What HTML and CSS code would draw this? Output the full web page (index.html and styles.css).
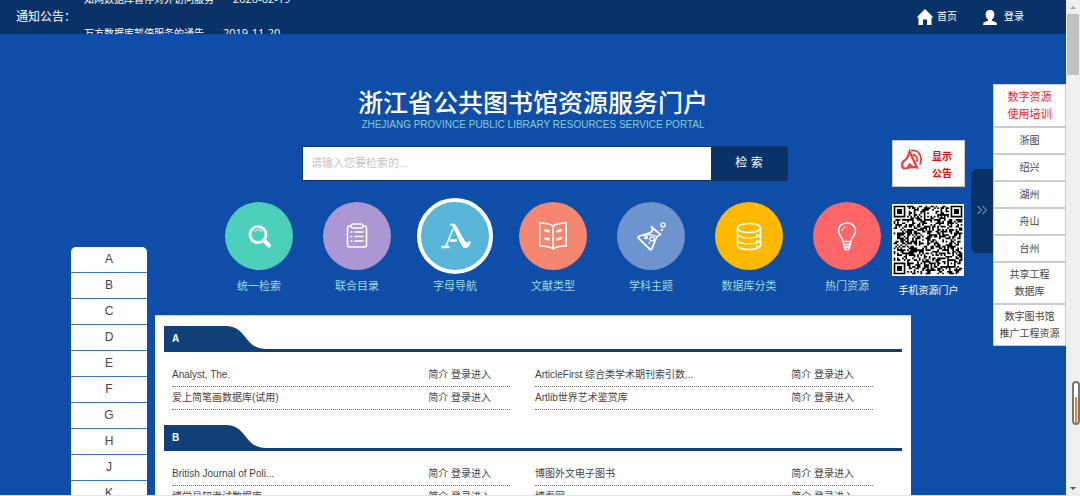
FILE: index.html
```html
<!DOCTYPE html>
<html lang="zh-CN">
<head>
<meta charset="utf-8">
<title>浙江省公共图书馆资源服务门户</title>
<link rel="stylesheet" href="styles.css">
</head>
<body>
<div class="page">
  <header class="topbar">
    <span class="topbar-label">通知公告：</span>
    <ul class="news">
      <li><a href="#">知网数据库暂停对外访问服务</a><time>2020-02-19</time></li>
      <li><a href="#">万方数据库暂停服务的通告</a><time>2019-11-20</time></li>
    </ul>
    <nav class="account">
      <a href="#"><svg width="18" height="17" viewBox="0 0 18 17"><path fill="#fff" d="M9 0 17.500 8.500H15.500V16H11V10.500H7V16H2.500V8.500H.5Z"/></svg>首页</a>
      <a href="#" class="login"><svg width="16" height="17" viewBox="0 0 16 17"><path fill="#fff" d="M8 1C4.800 1 3.500 3.200 3.700 6c.1 2 1 3.600 2.300 4.500v1.200L1.500 13.500 1 16h14l-.5-2.500L10 11.700v-1.200c1.300-.9 2.200-2.500 2.300-4.500C12.500 3.200 11.200 1 8 1Z"/></svg>登录</a>
    </nav>
  </header>

  <div class="layout">
    <nav class="letters">
      <a href="#">A</a><a href="#">B</a><a href="#">C</a><a href="#">D</a><a href="#">E</a><a href="#">F</a><a href="#">G</a><a href="#">H</a><a href="#">J</a><a href="#">K</a>
    </nav>

    <main class="center">
      <h1 class="title">浙江省公共图书馆资源服务门户</h1>
      <p class="subtitle">ZHEJIANG PROVINCE PUBLIC LIBRARY RESOURCES SERVICE PORTAL</p>
      <form class="search">
        <input type="text" aria-label="检索词" placeholder="请输入您要检索的...">
        <button type="button">检 索</button>
      </form>
      <nav class="channels">
        <a href="#"><span class="slot"><span class="disc green"><svg width="34" height="34" viewBox="0 0 34 34"><circle cx="16" cy="15.500" r="8" stroke-width="2.800"/><path d="M12 13c2-2.500 5-2.800 8-.5" stroke-width="1"/><path d="m22 21.500 5 5" stroke-width="4" stroke-linecap="round"/></svg></span></span>统一检索</a>
        <a href="#"><span class="slot"><span class="disc purple"><svg width="34" height="34" viewBox="0 0 34 34"><rect x="7.500" y="7" width="19" height="21" rx="2" stroke-width="1.600"/><rect x="11" y="5" width="12" height="4" rx="2" fill="#ab97d4"/><path d="M10.500 13h2m2 0h9m-13 4.500h2m2 0h9m-13 4.500h2m2 0h9" stroke-width="1.600"/></svg></span></span>联合目录</a>
        <a href="#"><span class="slot"><span class="disc sky active"><svg width="36" height="34" viewBox="0 0 36 34"><path fill="#fff" stroke="none" d="M12.500 6c2-2.500 5.500-2 7 1l8 14.500c1 1.800 2.500 2.500 3.500 1.400 1-1 3.500-.8 2.500 1.600-.8 2.500-2.500 4.500-5 4.500-2 0-3-1-4-3L15.500 7.500c-.8-1.500-2-1-3-1.500Z"/><path d="m16 10-7 17" stroke-width="1.600"/><path d="M4.500 28h8M13 21.500h7" stroke-width="2.400"/></svg></span></span>字母导航</a>
        <a href="#"><span class="slot"><span class="disc coral"><svg width="34" height="34" viewBox="0 0 34 34"><path d="M17 7C13.500 4.500 9 4 3.800 4v23c5 0 10 .3 13.200 3 3.200-2.700 8.200-3 13.200-3V4C25 4 20.500 4.500 17 7Zm0 0v23" stroke-width="1.600"/><path d="m8.500 11 5 1.500M8.500 19l5 1.500M25.500 11l-5 1.500M25.500 19l-5 1.500" stroke-width="2.400"/></svg></span></span>文献类型</a>
        <a href="#"><span class="slot"><span class="disc steel"><svg width="34" height="34" viewBox="0 0 34 34"><path d="m17 7.500 10 8.500M18 8.500c1 2.500 0 4.500-2.500 5.500L5.500 17c-1.500.5-1.500 1.500-.8 2.500L15.500 30c1 1 2 .8 2.500-.5l4-10c.6-1.800 2-3 4-3.500" stroke-width="1.800"/><circle cx="12" cy="18.500" r="1.400"/><circle cx="18" cy="20" r="2.100"/><circle cx="29" cy="6" r="2.100"/><circle cx="28" cy="11" r=".5"/><path d="M9.500 16.500c4-1.500 8-1.500 13 1M14.500 24h1.500"/></svg></span></span>学科主题</a>
        <a href="#"><span class="slot"><span class="disc amber"><svg width="34" height="34" viewBox="0 0 34 34"><ellipse cx="17" cy="9" rx="11.500" ry="4.500" stroke-width="1.600"/><path d="M5.500 9v17c0 6 23 6 23 0V9" stroke-width="1.600"/><path d="M5.500 14.500c0 6 23 6 23 0m-23 6c0 6 23 6 23 0" stroke-width="1.100"/><path d="M24 16h1.500m-1.500 6h1.500m-1.500 5h1.500" stroke-width="2"/></svg></span></span>数据库分类</a>
        <a href="#"><span class="slot"><span class="disc red"><svg width="34" height="34" viewBox="0 0 34 34"><path d="M13 22.500c0-4-4.500-5.500-4.500-11C8.500 1.500 25.500 1.500 25.500 11.500c0 5.500-4.500 7-4.500 11ZM14 25.500h6m-5.500 2.500h5M13 22.500l2 8h4l2-8" stroke-width="1.500"/><path d="M12 12c0-2 1.500-3.500 4-4" stroke-width="1"/></svg></span></span>热门资源</a>
      </nav>

      <div class="panel">
        <section>
          <h2><svg width="102" height="23" viewBox="0 0 102 23" aria-hidden="true"><path fill="#113f78" d="M0 0H62C83 0 80 23 102 23H0Z"/></svg><span>A</span></h2>
          <ul class="dbs">
            <li><a href="#">Analyst, The.</a><span><a href="#">简介</a> <a href="#">登录进入</a></span></li>
            <li><a href="#">ArticleFirst 综合类学术期刊索引数...</a><span><a href="#">简介</a> <a href="#">登录进入</a></span></li>
            <li><a href="#">爱上简笔画数据库(试用)</a><span><a href="#">简介</a> <a href="#">登录进入</a></span></li>
            <li><a href="#">Artlib世界艺术鉴赏库</a><span><a href="#">简介</a> <a href="#">登录进入</a></span></li>
          </ul>
        </section>
        <section>
          <h2><svg width="102" height="23" viewBox="0 0 102 23" aria-hidden="true"><path fill="#113f78" d="M0 0H62C83 0 80 23 102 23H0Z"/></svg><span>B</span></h2>
          <ul class="dbs">
            <li><a href="#">British Journal of Poli...</a><span><a href="#">简介</a> <a href="#">登录进入</a></span></li>
            <li><a href="#">博图外文电子图书</a><span><a href="#">简介</a> <a href="#">登录进入</a></span></li>
            <li><a href="#">博学易知考试数据库</a><span><a href="#">简介</a> <a href="#">登录进入</a></span></li>
            <li><a href="#">博看网</a><span><a href="#">简介</a> <a href="#">登录进入</a></span></li>
          </ul>
        </section>
      </div>
    </main>

    <aside class="tools">
      <div class="widgets">
        <a href="#" class="notice"><svg width="24" height="24" viewBox="0 0 24 24"><g fill="none" stroke="#f03b3b" stroke-width="2.200"><path d="M9.500 3.500 17 19.500l-4.500-.5-7.500 1.500C1 20.500 1.500 14 4.500 12.500 8 11 8.500 7 9.500 3.500Z"/><path d="M11 2.500c8-1 12 5.500 9 14M12.500 6.500c4 .3 5.500 4 4.500 7.500" stroke-width="1.800"/><path d="m8 19.500 1.500-3 3 2.500"/></g></svg><span>显示<br>公告</span></a>
        <svg class="qr" viewBox="-1 -1 43 43" role="img" aria-label="手机资源门户二维码"><rect x="-1" y="-1" width="43" height="43" fill="#fff"/><path id="qr-modules" fill="#000"/></svg>
        <span class="qr-label">手机资源门户</span>
      </div>
      <button type="button" class="handle" aria-label="收起"><svg width="10" height="10" viewBox="0 0 10 10"><path fill="none" stroke="#a9bbd6" d="m.5 1 4 4-4 4m5-8 4 4-4 4"/></svg></button>
      <nav class="regions">
        <a href="#" class="double hot">数字资源<br>使用培训</a>
        <a href="#">浙图</a>
        <a href="#">绍兴</a>
        <a href="#">湖州</a>
        <a href="#">舟山</a>
        <a href="#">台州</a>
        <a href="#" class="double">共享工程<br>数据库</a>
        <a href="#" class="double">数字图书馆<br>推广工程资源</a>
      </nav>
    </aside>
  </div>
</div>

<div class="scrollbar" aria-hidden="true">
  <svg width="14" height="14" viewBox="0 0 14 14"><path fill="#a3a3a3" d="m4 9 3-3 3 3Z"/></svg>
  <div class="thumb"></div>
  <div class="gauge"><div class="gauge-fill"></div></div>
  <svg width="14" height="14" viewBox="0 0 14 14"><path fill="#505050" d="m4 5 3 3 3-3Z"/></svg>
</div>
<script src="qr.js"></script>
</body>
</html>
```
FILE: styles.css
```css
* { box-sizing: border-box; }

body {
  margin: 0;
  height: 100vh;
  display: flex;
  overflow: hidden;
  background: #0e4da8;
  color: #444;
  font: 10px/17px "Liberation Sans", "Noto Sans CJK SC", sans-serif;
}

a { color: inherit; text-decoration: none; }
ul { list-style: none; margin: 0; padding: 0; }
h1, h2, p { margin: 0; font-weight: normal; }
button { border: 0; padding: 0; font: inherit; }

.page {
  flex: 1;
  min-width: 0;
  overflow: hidden;
  border-bottom: 1px solid #dfe5ef;
}

.topbar {
  display: flex;
  height: 34px;
  padding: 0 42px 0 16px;
  overflow: hidden;
  background: #0a3266;
  color: #fff;
  line-height: 34px;
}
.topbar-label { width: 68px; font-size: 12px; white-space: nowrap; }
.news { flex: 1; margin-top: -18px; line-height: 33px; }
.news time { margin-left: 19px; font-family: "Open Sans", sans-serif; font-size: 11px; }
.account { display: flex; gap: 25px; }
.account a { display: flex; align-items: center; gap: 3px; }
.account .login { gap: 6px; }

.layout { display: flex; align-items: flex-start; padding-left: 71px; }

.letters {
  width: 76px;
  margin: 213px 8px 0 0;
  overflow: hidden;
  border-radius: 5px 5px 0 0;
  background: #fff;
  font-size: 12px;
  line-height: 25px;
  text-align: center;
}
.letters a { display: block; border-bottom: 1px solid #3f73bd; }

.center { flex: 1; min-width: 0; padding-top: 54px; }
.title { color: #fff; font-size: 25px; font-weight: 500; line-height: 30px; text-align: center; }
.subtitle {
  padding-top: 1px;
  color: #86cbd6;
  font-size: 10px;
  line-height: 12px;
  text-align: center;
}

.search {
  display: flex;
  width: 486px;
  height: 35px;
  margin: 15px 0 0 147px;
  border: 1px solid #0a3266;
  border-radius: 2px;
}
.search input {
  flex: 1;
  min-width: 0;
  padding: 0 8px;
  border: 0;
  background: #fff;
  font: inherit;
  font-size: 11px;
}
.search input::placeholder { color: #c4c4c4; }
.search button { width: 76px; background: #0a3266; color: #fff; font-size: 12px; }

.channels {
  display: grid;
  grid-template-columns: repeat(7, 98px);
  margin: 17px 0 17px 55px;
  color: #9fdbe2;
  font-size: 11px;
  line-height: 24px;
  text-align: center;
}
.slot { display: flex; height: 76px; align-items: center; justify-content: center; }
.disc {
  display: flex;
  width: 68px;
  height: 68px;
  align-items: center;
  justify-content: center;
  border-radius: 50%;
}
.disc svg { fill: none; stroke: #fff; stroke-width: 1.3; }
.active { width: 76px; height: 76px; border: 4px solid #fff; }
.green { background: #4dd0bb; }
.purple { background: #ab97d4; }
.sky { background: #5ab6d9; }
.coral { background: #f58670; }
.steel { background: #6e94d0; }
.amber { background: #ffb900; }
.red { background: #ff6668; }

.panel { padding: 10px 9px 40px; border-top: 1px solid #c3d1e8; background: #fff; }
.panel h2 {
  display: grid;
  height: 26px;
  border-bottom: 3px solid #113f78;
  color: #fff;
  font-size: 10px;
  font-weight: bold;
  line-height: 25px;
}
.panel h2 > * { grid-area: 1 / 1; }
.panel h2 span { padding-left: 8px; }
.dbs {
  display: grid;
  grid-template-columns: 1fr 1fr;
  column-gap: 25px;
  padding: 12px 29px 15px 8px;
}
.dbs li {
  display: flex;
  justify-content: space-between;
  padding-right: 19px;
  border-bottom: 1px dotted #777;
  line-height: 22px;
}

.tools { display: flex; align-items: flex-start; margin-left: -19px; padding-top: 50px; }
.widgets {
  display: flex;
  flex-direction: column;
  width: 73px;
  margin: 56px 6px 0 0;
  color: #fff;
  text-align: center;
}
.notice {
  display: flex;
  height: 47px;
  align-items: center;
  gap: 8px;
  padding: 2px 0 0 7px;
  border: 1px solid #ccc;
  background: #fff;
  color: #f00;
  font-weight: bold;
}
.notice svg { margin-bottom: 9px; }
.qr { width: 72px; height: 72px; margin: 17px 0 6px; }
.handle {
  width: 22px;
  height: 84px;
  margin-top: 85px;
  border-radius: 6px 0 0 6px;
  background: #0a3266;
}
.regions { width: 73px; border: 1px solid #ccc; background: #fff; text-align: center; }
.regions a { display: block; padding: 4px 0; white-space: nowrap; }
.regions a + a { border-top: 2px solid #ccc; }
.regions .double { padding: 3px 0; }
.regions .hot { padding-top: 4px; color: #f22; font-size: 11px; }

.scrollbar { display: flex; flex-direction: column; width: 14px; background: #f0f0f0; }
.thumb { width: 12px; height: 61px; margin-left: 1px; background: #c1c1c1; }
.gauge {
  display: flex;
  width: 8px;
  height: 44px;
  margin: auto 0 57px 6px;
  border: 2px solid #777;
  border-radius: 4px;
  background: #fff;
}
.gauge-fill { width: 2px; height: 26px; margin: auto auto 0; background: #ff7a22; }
```
FILE: qr.js
```js
// Fills the code area with modules, then the finder, timing and alignment marks.
const size = 41;

function noise(x, y) {
  let h = Math.imul(x + 11, 374761393) ^ Math.imul(y + 7, 668265263);
  h = Math.imul(h ^ (h >>> 13), 1274126177);
  return ((h ^ (h >>> 16)) >>> 0) % 100 < 50;
}

const ring = (x, y, cx, cy) => Math.max(Math.abs(x - cx), Math.abs(y - cy));

function isDark(x, y) {
  for (const [cx, cy] of [[3, 3], [size - 4, 3], [3, size - 4]]) {
    const d = ring(x, y, cx, cy);
    if (d <= 4) return d === 3 || d <= 1;
  }
  const a = ring(x, y, 34, 34);
  if (a <= 2) return a !== 1;
  if (x === 6 || y === 6) return (x + y) % 2 === 0;
  return noise(x, y);
}

let d = "";
for (let y = 0; y < size; y++) {
  for (let x = 0; x < size; x++) {
    if (isDark(x, y)) d += `M${x} ${y}h1v1h-1z`;
  }
}
document.getElementById("qr-modules").setAttribute("d", d);
```
